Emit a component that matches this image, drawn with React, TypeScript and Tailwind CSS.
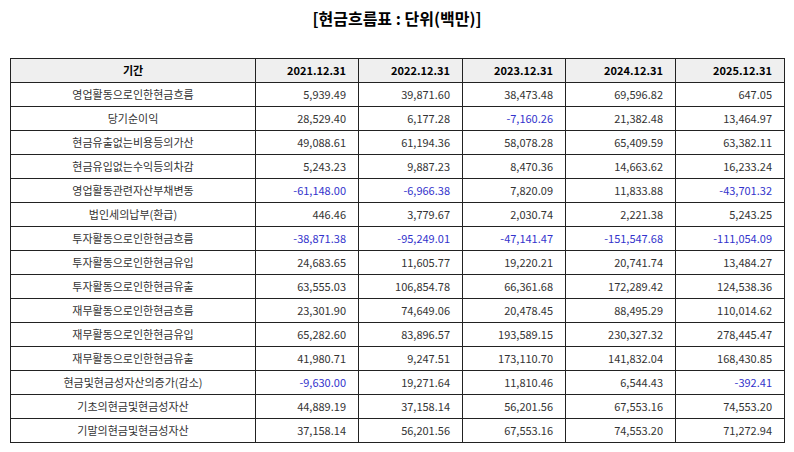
import React from "react";

type Row = { label: string; values: string[] };

const rows: Row[] = [
  { label: "영업활동으로인한현금흐름", values: ["5,939.49", "39,871.60", "38,473.48", "69,596.82", "647.05"] },
  { label: "당기순이익", values: ["28,529.40", "6,177.28", "-7,160.26", "21,382.48", "13,464.97"] },
  { label: "현금유출없는비용등의가산", values: ["49,088.61", "61,194.36", "58,078.28", "65,409.59", "63,382.11"] },
  { label: "현금유입없는수익등의차감", values: ["5,243.23", "9,887.23", "8,470.36", "14,663.62", "16,233.24"] },
  { label: "영업활동관련자산부채변동", values: ["-61,148.00", "-6,966.38", "7,820.09", "11,833.88", "-43,701.32"] },
  { label: "법인세의납부(환급)", values: ["446.46", "3,779.67", "2,030.74", "2,221.38", "5,243.25"] },
  { label: "투자활동으로인한현금흐름", values: ["-38,871.38", "-95,249.01", "-47,141.47", "-151,547.68", "-111,054.09"] },
  { label: "투자활동으로인한현금유입", values: ["24,683.65", "11,605.77", "19,220.21", "20,741.74", "13,484.27"] },
  { label: "투자활동으로인한현금유출", values: ["63,555.03", "106,854.78", "66,361.68", "172,289.42", "124,538.36"] },
  { label: "재무활동으로인한현금흐름", values: ["23,301.90", "74,649.06", "20,478.45", "88,495.29", "110,014.62"] },
  { label: "재무활동으로인한현금유입", values: ["65,282.60", "83,896.57", "193,589.15", "230,327.32", "278,445.47"] },
  { label: "재무활동으로인한현금유출", values: ["41,980.71", "9,247.51", "173,110.70", "141,832.04", "168,430.85"] },
  { label: "현금및현금성자산의증가(감소)", values: ["-9,630.00", "19,271.64", "11,810.46", "6,544.43", "-392.41"] },
  { label: "기초의현금및현금성자산", values: ["44,889.19", "37,158.14", "56,201.56", "67,553.16", "74,553.20"] },
  { label: "기말의현금및현금성자산", values: ["37,158.14", "56,201.56", "67,553.16", "74,553.20", "71,272.94"] },
];

const headers = ["2021.12.31", "2022.12.31", "2023.12.31", "2024.12.31", "2025.12.31"];
const widths = ["w-[245px]", "w-[103px]", "w-[104px]", "w-[103px]", "w-[110px]", "w-[109px]"];

export default function App() {
  return (
    <div className="w-[794px] h-[452px] bg-white text-black font-['Noto_Sans_CJK_KR',sans-serif]">
      <div className="h-[58px] pt-[5px] flex justify-center">
        <h1 className="text-[16px] leading-[26px] font-bold text-black">[현금흐름표 : 단위(백만)]</h1>
      </div>
      <div className="px-[10px]">
        <table className="w-[774px] border-collapse table-fixed text-[11px]">
          <colgroup>
            {widths.map((w, i) => (
              <col key={i} className={w} />
            ))}
          </colgroup>
          <thead>
            <tr className="h-[24px] bg-[#efefef]">
              <th className="border border-[#222] font-bold text-center">기간</th>
              {headers.map((h) => (
                <th key={h} className="border border-[#222] font-bold text-right pr-[12px]">
                  {h}
                </th>
              ))}
            </tr>
          </thead>
          <tbody>
            {rows.map((r) => (
              <tr key={r.label} className="h-[24px]">
                <td className="border border-[#222] text-center text-[#333]">{r.label}</td>
                {r.values.map((v, i) => (
                  <td
                    key={i}
                    className={
                      v.startsWith("-")
                        ? "border border-[#222] text-right pr-[12px] text-[#3333cc]"
                        : "border border-[#222] text-right pr-[12px] text-[#333]"
                    }
                  >
                    {v}
                  </td>
                ))}
              </tr>
            ))}
          </tbody>
        </table>
      </div>
    </div>
  );
}
